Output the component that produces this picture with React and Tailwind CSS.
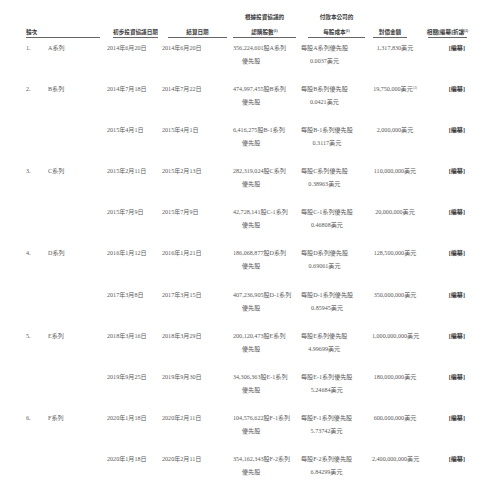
const cols = "grid grid-cols-[22px_59px_55px_71px_68px_71px_56px_42px]";

const rows = [
  { no: "1.", series: "A系列", d1: "2014年6月20日", d2: "2014年6月20日", shares: "356,224,601股A系列", cost: "每股A系列優先股", price: "0.0037美元", amount: "1,317,830美元" },
  { no: "2.", series: "B系列", d1: "2014年7月18日", d2: "2014年7月22日", shares: "474,997,455股B系列", cost: "每股B系列優先股", price: "0.0421美元", amount: "19,750,000美元", note: "(3)" },
  { d1: "2015年4月1日", d2: "2015年4月1日", shares: "6,416,275股B-1系列", cost: "每股B-1系列優先股", price: "0.3117美元", amount: "2,000,000美元" },
  { no: "3.", series: "C系列", d1: "2015年2月11日", d2: "2015年2月13日", shares: "282,319,024股C系列", cost: "每股C系列優先股", price: "0.38963美元", amount: "110,000,000美元" },
  { d1: "2015年7月9日", d2: "2015年7月9日", shares: "42,728,141股C-1系列", cost: "每股C-1系列優先股", price: "0.46808美元", amount: "20,000,000美元" },
  { no: "4.", series: "D系列", d1: "2016年1月12日", d2: "2016年1月21日", shares: "186,068,877股D系列", cost: "每股D系列優先股", price: "0.69061美元", amount: "128,500,000美元" },
  { d1: "2017年3月8日", d2: "2017年3月15日", shares: "407,236,905股D-1系列", cost: "每股D-1系列優先股", price: "0.85945美元", amount: "350,000,000美元" },
  { no: "5.", series: "E系列", d1: "2018年3月16日", d2: "2018年3月29日", shares: "200,120,473股E系列", cost: "每股E系列優先股", price: "4.99699美元", amount: "1,000,000,000美元" },
  { d1: "2019年9月25日", d2: "2019年9月30日", shares: "34,306,363股E-1系列", cost: "每股E-1系列優先股", price: "5.24684美元", amount: "180,000,000美元" },
  { no: "6.", series: "F系列", d1: "2020年1月18日", d2: "2020年2月11日", shares: "104,576,622股F-1系列", cost: "每股F-1系列優先股", price: "5.73742美元", amount: "600,000,000美元" },
  { d1: "2020年1月18日", d2: "2020年2月11日", shares: "354,162,343股F-2系列", cost: "每股F-2系列優先股", price: "6.84299美元", amount: "2,400,000,000美元" },
];

function Sup({ children }) {
  return <span className="text-[3.5px] align-top relative top-[-1px]">{children}</span>;
}

export default function App() {
  return (
    <div
      className="w-[500px] h-[487px] bg-white pl-[26px] pt-[12px] text-[#5a5a5a] overflow-hidden"
      style={{ fontFamily: '"Liberation Serif", "Noto Sans CJK TC", serif' }}
    >
      {/* header */}
      <div className={`${cols} text-[5.6px] font-bold text-[#3a3a3a]`}>
        <div className="col-span-2 mr-[7px] border-b border-[#666] flex flex-col justify-end">
          <div className="leading-[10px]">輪次</div>
        </div>
        <div className="ml-[6px] mr-[4px] border-b border-[#666] flex flex-col justify-end items-center">
          <div className="leading-[10px] whitespace-nowrap">初步投資協議日期</div>
        </div>
        <div className="ml-[6px] mr-[6px] border-b border-[#666] flex flex-col justify-end items-center">
          <div className="leading-[10px]">結算日期</div>
        </div>
        <div className="mr-[5px] border-b border-[#666] flex flex-col justify-end items-center gap-[5px]">
          <div className="leading-[10px] whitespace-nowrap">根據投資協議的</div>
          <div className="leading-[10px] whitespace-nowrap">認購股數<Sup>(1)</Sup></div>
        </div>
        <div className="ml-[7px] mr-[7px] border-b border-[#666] flex flex-col justify-end items-center gap-[5px]">
          <div className="leading-[10px] whitespace-nowrap">付款本公司的</div>
          <div className="leading-[10px] whitespace-nowrap">每股成本<Sup>(1)</Sup></div>
        </div>
        <div className="ml-[1px] mr-[21px] border-b border-[#666] flex flex-col justify-end items-center">
          <div className="leading-[10px] whitespace-nowrap">對價金額</div>
        </div>
        <div className="mr-[3px] border-b border-[#666] flex flex-col justify-end items-center">
          <div className="leading-[10px] whitespace-nowrap">相關[編纂]折讓<Sup>(2)</Sup></div>
        </div>
      </div>

      {/* body */}
      <div className="mt-[3.5px] text-[6.1px] leading-[13px]">
        {rows.map((r, i) => (
          <div key={i} className={`${cols} h-[41.2px]`}>
            <div>{r.no}</div>
            <div>{r.series}</div>
            <div className="whitespace-nowrap">{r.d1}</div>
            <div className="whitespace-nowrap">{r.d2}</div>
            <div className="whitespace-nowrap">
              <div>{r.shares}</div>
              <div className="pl-[9px]">優先股</div>
            </div>
            <div className="whitespace-nowrap flex flex-col items-start">
              <div className="flex flex-col items-center">
                <div>{r.cost}</div>
                <div>{r.price}</div>
              </div>
            </div>
            <div className="whitespace-nowrap text-center pr-[10px]">
              {r.amount}
              {r.note && <Sup>{r.note}</Sup>}
            </div>
            <div className="text-right pr-[5px] font-bold text-[#3a3a3a]">[編纂]</div>
          </div>
        ))}
      </div>
    </div>
  );
}
